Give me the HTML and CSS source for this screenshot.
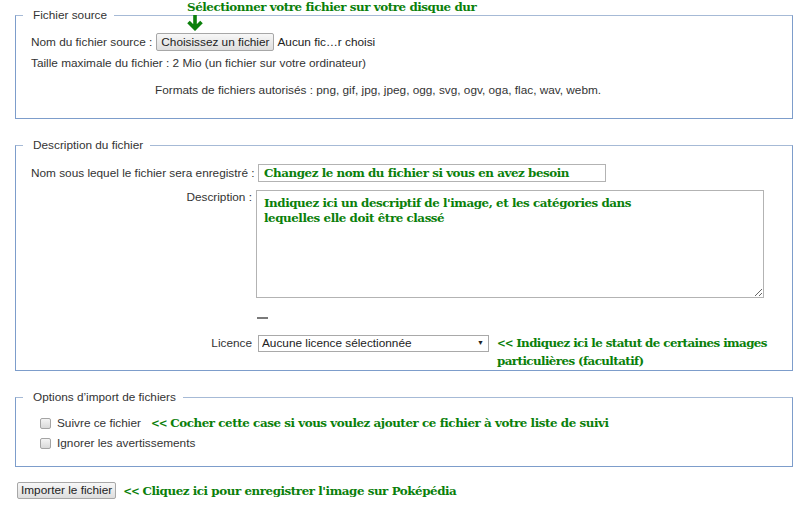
FILE: index.html
```html
<!DOCTYPE html>
<html lang="fr">
<head>
<meta charset="utf-8">
<title>Importer un fichier</title>
<link rel="stylesheet" href="styles.css">
</head>
<body>
<div class="page">
  <div class="note note-top">Sélectionner votre fichier sur votre disque dur</div>
  <svg class="arrow" width="18" height="16" viewBox="0 0 18 16" aria-hidden="true">
    <path d="M9 0 V14 M2.5 7 L9 13.5 L15.5 7" fill="none" stroke="#0b800b" stroke-width="3.6"/>
  </svg>

  <fieldset class="box box-source">
    <legend>Fichier source</legend>
    <div class="row row-file">
      <span class="lbl-inline">Nom du fichier source :</span>
      <button class="btn" type="button">Choisissez un fichier</button>
      <span class="file-name">Aucun fic…r choisi</span>
    </div>
    <div class="line line-size">Taille maximale du fichier : 2 Mio (un fichier sur votre ordinateur)</div>
    <div class="line line-formats">Formats de fichiers autorisés : png, gif, jpg, jpeg, ogg, svg, ogv, oga, flac, wav, webm.</div>
  </fieldset>

  <fieldset class="box box-desc">
    <legend>Description du fichier</legend>
    <div class="frow frow-name">
      <div class="flabel">Nom sous lequel le fichier sera enregistré :</div>
      <input class="text-input note" type="text" value="Changez le nom du fichier si vous en avez besoin">
    </div>
    <div class="frow frow-desc">
      <div class="flabel">Description :</div>
      <textarea class="text-area note">Indiquez ici un descriptif de l'image, et les catégories dans
lequelles elle doit être classé</textarea>
    </div>
    <div class="frow frow-dash">
      <div class="flabel"></div>
      <span class="dash"></span>
    </div>
    <div class="frow frow-lic">
      <div class="flabel lic-label">Licence</div>
      <span class="select-wrap">
        <select class="select"><option>Aucune licence sélectionnée</option></select>
        <span class="select-arrow">▼</span>
      </span>
      <div class="note note-lic"><span class="lt">&lt;&lt;</span> Indiquez ici le statut de certaines images<br>particulières (facultatif)</div>
    </div>
  </fieldset>

  <fieldset class="box box-opts">
    <legend>Options d’import de fichiers</legend>
    <div class="crow crow-1">
      <input class="check" type="checkbox">
      <span class="clabel">Suivre ce fichier</span>
      <span class="note note-check"><span class="lt">&lt;&lt;</span> Cocher cette case si vous voulez ajouter ce fichier à votre liste de suivi</span>
    </div>
    <div class="crow crow-2">
      <input class="check" type="checkbox">
      <span class="clabel">Ignorer les avertissements</span>
    </div>
  </fieldset>

  <div class="submit-row">
    <button class="btn btn-submit" type="button">Importer le fichier</button>
    <span class="note note-submit"><span class="lt">&lt;&lt;</span> Cliquez ici pour enregistrer l'image sur Poképédia</span>
  </div>
</div>
</body>
</html>
```

FILE: styles.css
```css
html, body {
  margin: 0;
  padding: 0;
  background: #ffffff;
}

body {
  font-family: "Liberation Sans", Arial, sans-serif;
  font-size: 11.8px;
  color: #333333;
}

.page {
  position: relative;
  padding: 8px 7px 0 15px;
  width: 800px;
  height: 510px;
  box-sizing: border-box;
}

.note {
  font-family: "DejaVu Serif", "Liberation Serif", serif;
  font-weight: bold;
  color: #0b800b;
  font-size: 11.9px;
  letter-spacing: -0.45px;
  white-space: nowrap;
}

.note .lt {
  font-size: 10.5px;
  letter-spacing: -1px;
}

.note-lic {
  letter-spacing: -0.6px;
}

.note-top {
  position: absolute;
  left: 187px;
  top: 0;
  line-height: 14px;
}

.arrow {
  position: absolute;
  left: 186px;
  top: 15px;
}

.box {
  margin: 0;
  padding: 0 0 0 7px;
  border: 1px solid #7d9dcb;
  border-top-color: #a6bad6;
  min-width: 0;
}

.box legend {
  padding: 0 7px 0 10px;
  line-height: 14px;
  font-size: 11.8px;
  color: #333333;
}

.box-source {
  margin-bottom: 19px;
  padding-bottom: 21px;
}

.box-desc {
  margin-bottom: 19px;
  padding-bottom: 0;
}

.box-opts {
  padding-bottom: 14px;
}

.row,
.line,
.frow,
.crow {
  padding-left: 8px;
}

.row-file {
  display: flex;
  align-items: center;
  height: 18px;
  margin-top: 11px;
}

.lbl-inline {
  margin-right: 4px;
  white-space: nowrap;
}

.btn {
  font-family: "Liberation Sans", Arial, sans-serif;
  font-size: 11.8px;
  color: #222222;
  height: 18px;
  padding: 0 4px;
  margin: 0;
  border: 1px solid #a7a7a7;
  border-radius: 2px;
  background: linear-gradient(#f7f7f7, #dedede);
  line-height: 16px;
  white-space: nowrap;
}

.file-name {
  margin-left: 3px;
  color: #222222;
  white-space: nowrap;
}

.line {
  line-height: 14px;
  white-space: nowrap;
}

.line-size {
  margin-top: 5px;
}

.line-formats {
  margin-top: 13px;
  padding-left: 132px;
}

.frow {
  display: flex;
  align-items: flex-start;
}

.flabel {
  width: 225px;
  flex: none;
  box-sizing: border-box;
  text-align: right;
  padding-right: 4px;
  line-height: 14px;
  white-space: nowrap;
}

.frow-name {
  margin-top: 12px;
  align-items: center;
}

.text-input {
  width: 348px;
  height: 18px;
  box-sizing: border-box;
  margin: 0 0 0 2px;
  padding: 0 5px;
  border: 1px solid #b3b3b3;
  outline: none;
}

.frow-desc {
  margin-top: 8px;
}

.text-area {
  width: 508px;
  height: 108px;
  box-sizing: border-box;
  margin: 0;
  padding: 5px 7px;
  border: 1px solid #b3b3b3;
  line-height: 15px;
  resize: both;
  outline: none;
}

.frow-dash {
  margin-top: 19px;
  height: 2px;
}

.dash {
  display: block;
  width: 11px;
  height: 2px;
  margin-left: 1px;
  background: #7a7a7a;
}

.frow-lic {
  margin-top: 15px;
}

.lic-label {
  line-height: 18px;
}

.select-wrap {
  position: relative;
  display: block;
  margin: 1px 0 0 2px;
  flex: none;
}

.select {
  appearance: none;
  -webkit-appearance: none;
  display: block;
  width: 231px;
  height: 17px;
  box-sizing: border-box;
  margin: 0;
  padding: 0 0 0 3px;
  border: 1px solid #a9a9a9;
  border-radius: 0;
  background: #ffffff;
  font-family: "Liberation Sans", Arial, sans-serif;
  font-size: 11.8px;
  color: #222222;
  line-height: 15px;
}

.select-arrow {
  position: absolute;
  right: 5px;
  top: 3px;
  font-size: 7px;
  line-height: 10px;
  color: #222222;
  pointer-events: none;
}

.note-lic {
  margin-left: 8px;
  line-height: 18px;
}

.crow {
  display: flex;
  align-items: center;
  height: 18px;
  white-space: nowrap;
}

.crow-1 {
  margin-top: 10px;
}

.crow-2 {
  margin-top: 2px;
}

.check {
  appearance: none;
  -webkit-appearance: none;
  width: 11px;
  height: 11px;
  margin: 0 0 0 9px;
  border: 1px solid #a4a4a4;
  border-radius: 2px;
  background: linear-gradient(#f4f4f4, #d9d9d9);
  box-sizing: border-box;
}

.clabel {
  margin-left: 6px;
}

.note-check {
  margin-left: 10px;
}

.submit-row {
  display: flex;
  align-items: center;
  margin-top: 15px;
  padding-left: 2px;
}

.btn-submit {
  height: 17px;
  padding: 0 3px;
  line-height: 15px;
}

.note-submit {
  margin-left: 7px;
}
```
